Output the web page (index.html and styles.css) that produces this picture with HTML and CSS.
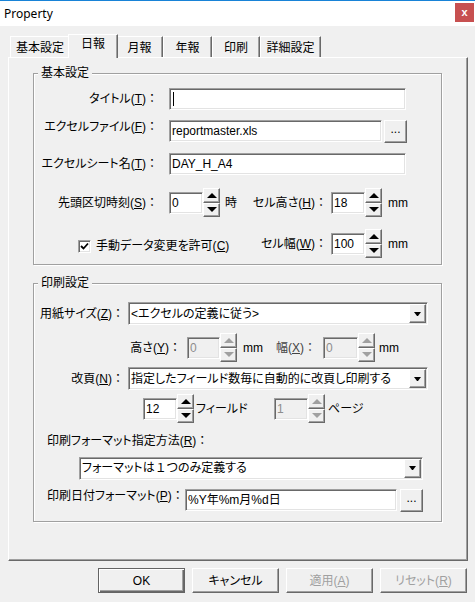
FILE: index.html
```html
<!DOCTYPE html>
<html>
<head>
<meta charset="utf-8">
<title>Property</title>
<link rel="stylesheet" href="styles.css">
</head>
<body>
<div class="window">
  <div class="titlebar">
    <span class="title">Property</span>
    <span class="close">x</span>
  </div>

  <div class="tabs">
    <div class="tab t1">基本設定</div>
    <div class="tab t2 on">日報</div>
    <div class="tab t3">月報</div>
    <div class="tab t4">年報</div>
    <div class="tab t5">印刷</div>
    <div class="tab t6">詳細設定</div>
  </div>

  <div class="panel">
    <fieldset class="group">
      <legend>基本設定</legend>

      <div class="row r-title">
        <span class="lbl lbl-a">タイトル(<u>T</u>)<span class="colon">：</span></span>
        <div class="edit w237"><span class="caret"></span></div>
      </div>

      <div class="row r-file">
        <span class="lbl lbl-a">エクセルファイル(<u>F</u>)<span class="colon">：</span></span>
        <div class="edit w213">reportmaster.xls</div>
        <div class="browse">...</div>
      </div>

      <div class="row r-sheet">
        <span class="lbl lbl-a">エクセルシート名(<u>T</u>)<span class="colon">：</span></span>
        <div class="edit w237">DAY_H_A4</div>
      </div>

      <div class="row r-time">
        <span class="lbl lbl-a">先頭区切時刻(<u>S</u>)<span class="colon">：</span></span>
        <div class="edit w34">0</div>
        <div class="spin"><div class="sb"><i class="up"></i></div><div class="sb"><i class="dn"></i></div></div>
        <span class="unit-ji">時</span>
        <span class="lbl lbl-b">セル高さ(<u>H</u>)<span class="colon">：</span></span>
        <div class="edit w34">18</div>
        <div class="spin"><div class="sb"><i class="up"></i></div><div class="sb"><i class="dn"></i></div></div>
        <span class="mm">mm</span>
      </div>

      <div class="row r-width">
        <div class="chk-area">
          <span class="check"><svg width="9" height="9" viewBox="0 0 9 9"><path d="M1 4 L3.5 6.5 L8 1.5" stroke="#000" stroke-width="1.8" fill="none"/></svg></span>
          <span>手動データ変更を許可(<u>C</u>)</span>
        </div>
        <span class="lbl lbl-b">セル幅(<u>W</u>)<span class="colon">：</span></span>
        <div class="edit w34">100</div>
        <div class="spin"><div class="sb"><i class="up"></i></div><div class="sb"><i class="dn"></i></div></div>
        <span class="mm">mm</span>
      </div>
    </fieldset>

    <fieldset class="group g2">
      <legend>印刷設定</legend>

      <div class="row r-paper">
        <span class="lbl lbl-b">用紙サイズ(<u>Z</u>)<span class="colon">：</span></span>
        <div class="combo w300"><span class="val">&lt;エクセルの定義に従う&gt;</span><span class="drop"><i class="dt"></i></span></div>
      </div>

      <div class="row r-size">
        <span class="lbl lbl-d">高さ(<u>Y</u>)<span class="colon">：</span></span>
        <div class="edit w33 dis">0</div>
        <div class="spin dis"><div class="sb"><i class="up"></i></div><div class="sb"><i class="dn"></i></div></div>
        <span class="mm mm-w">mm</span>
        <span class="lbl lbl-e">幅(<u>X</u>)<span class="colon">：</span></span>
        <div class="edit w35 dis">0</div>
        <div class="spin dis"><div class="sb"><i class="up"></i></div><div class="sb"><i class="dn"></i></div></div>
        <span class="mm mm-2">mm</span>
      </div>

      <div class="row r-break">
        <span class="lbl lbl-b">改頁(<u>N</u>)<span class="colon">：</span></span>
        <div class="combo w300"><span class="val">指定したフィールド数毎に自動的に改頁し印刷する</span><span class="drop"><i class="dt"></i></span></div>
      </div>

      <div class="row r-count">
        <div class="edit w34">12</div>
        <div class="spin"><div class="sb"><i class="up"></i></div><div class="sb"><i class="dn"></i></div></div>
        <span class="unit-field">フィールド</span>
        <div class="edit w34 dis">1</div>
        <div class="spin dis"><div class="sb"><i class="up"></i></div><div class="sb"><i class="dn"></i></div></div>
        <span class="unit-page">ページ</span>
      </div>

      <div class="row r-fmt-lbl">
        <span>印刷フォーマット指定方法(<u>R</u>)<span class="colon">：</span></span>
      </div>

      <div class="row r-fmt">
        <div class="combo w344"><span class="val">フォーマットは<span class="full">１</span>つのみ定義する</span><span class="drop"><i class="dt"></i></span></div>
      </div>

      <div class="row r-date">
        <span class="lbl-date">印刷日付フォーマット(<u>P</u>)<span class="colon">：</span></span>
        <div class="edit w212">%Y年%m月%d日</div>
        <div class="browse b-date">...</div>
      </div>
    </fieldset>
  </div>

  <div class="footer">
    <div class="btn def">OK</div>
    <div class="btn">キャンセル</div>
    <div class="btn dis">適用(<u>A</u>)</div>
    <div class="btn dis">リセット(<u>R</u>)</div>
  </div>
</div>
</body>
</html>
```

FILE: styles.css
```css
body{
margin:0;
background:#f0f0f0;
font-family:"Liberation Sans","Noto Sans CJK JP",sans-serif;
font-size:12px;
line-height:14px;
color:#000;
font-feature-settings:"palt";
}
u{text-decoration:underline;}
.colon,.full{font-feature-settings:normal;}

.window{width:475px;height:602px;}

/* title bar */
.titlebar{
height:26px;
box-sizing:border-box;
border-top:1px solid #1883d7;
background:#fff;
display:flex;
justify-content:space-between;
padding:0 1px 0 4px;
}
.title{font-family:"Noto Sans",sans-serif;font-size:12px;line-height:25px;}
.close{
width:19px;height:19px;margin-top:2px;
background:#c75050;color:#fff;
font:bold 11px/18px "Liberation Sans",sans-serif;
text-align:center;
}

/* tabs */
.tabs{display:flex;padding-left:10px;margin-top:10px;height:21px;}
.tab{
box-sizing:border-box;
height:21px;
border-top:1px solid #fff;
border-left:1px solid #fff;
border-right:1px solid #696969;
box-shadow:inset -1px 0 #a0a0a0;
text-align:center;
padding-top:4px;
white-space:nowrap;
}
.tab.on{
position:relative;z-index:1;
margin:-2px -2px 0;
height:24px;
background:#f0f0f0;
padding-top:2px;
}
.t1{width:60px;}
.t2{width:50px;}
.t3{width:47px;}
.t4{width:49px;}
.t5{width:48px;}
.t6{width:61px;}

/* panel */
.panel{
box-sizing:border-box;
width:460px;height:504px;
margin-left:8px;
border-top:1px solid #fff;
border-left:1px solid #fff;
border-right:1px solid #696969;
border-bottom:1px solid #696969;
box-shadow:inset -1px -1px #a0a0a0;
padding:8px 0 0 24px;
}
.group{
margin:0;padding:0 0 6px 0;
min-width:0;
width:409px;
box-sizing:border-box;
border:1px solid #a0a0a0;
box-shadow:inset 1px 1px #fff,1px 1px #fff;
}
.group legend{
padding:0 3px;
margin-left:4px;
line-height:14px;
background:#f0f0f0;
}
.g2{margin-top:11px;padding-bottom:9px;}

.row{display:flex;align-items:center;}
.r-title{margin-top:8px;height:22px;}
.r-file{margin-top:10px;height:23px;align-items:flex-start;}
.r-sheet{margin-top:10px;height:22px;}
.r-time{margin-top:13px;height:29px;}
.r-width{margin-top:12px;height:29px;}

.r-paper{margin-top:12px;height:23px;}
.r-size{margin-top:8px;height:29px;}
.r-break{margin-top:5px;height:23px;}
.r-count{margin-top:4px;height:29px;padding-left:109px;}
.r-fmt-lbl{margin-top:11px;height:14px;padding-left:13px;}
.r-fmt{margin-top:9px;height:22px;padding-left:45px;}
.r-date{margin-top:10px;height:23px;padding-left:13px;align-items:flex-start;}

.lbl{flex:none;text-align:right;white-space:nowrap;}
.lbl-a{width:124px;margin-right:11px;}
.lbl-b{width:90px;margin-right:4px;}
.lbl-d{width:147px;margin-right:6px;}
.lbl-e{width:49px;margin-right:7px;color:#444;}
.lbl-date{width:138px;flex:none;white-space:nowrap;}

/* sunken edit box */
.edit{
flex:none;
box-sizing:border-box;
height:22px;
display:flex;align-items:center;
background:#fff;
border:1px solid;
border-color:#a0a0a0 #fff #fff #a0a0a0;
box-shadow:inset 1px 1px #696969,inset -1px -1px #e3e3e3;
padding:0 2px;
white-space:nowrap;
overflow:hidden;
}
.edit.dis{background:#f0f0f0;color:#8d8d8d;}
.caret{width:1px;height:14px;background:#000;margin-left:1px;}
.w237{width:237px;}
.w213{width:213px;}
.w212{width:212px;}
.w35{width:35px;}
.w34{width:34px;}
.w33{width:33px;}

/* raised buttons */
.browse,.sb,.drop,.btn{
box-sizing:border-box;
background:#f0f0f0;
border:1px solid;
border-color:#fff #696969 #696969 #fff;
box-shadow:inset -1px -1px #a0a0a0;
}
.browse{
flex:none;
width:23px;height:23px;
margin-left:2px;
text-align:center;
line-height:17px;
}
.b-date{margin-left:3px;}

.spin{flex:none;width:17px;height:29px;display:flex;flex-direction:column;}
.sb{flex:1;display:flex;align-items:center;justify-content:center;}
.sb i{display:block;width:0;height:0;border-left:5px solid transparent;border-right:5px solid transparent;}
.sb .up{border-bottom:5px solid #000;}
.sb .dn{border-top:5px solid #000;}
.spin.dis .up{border-bottom-color:#a0a0a0;}
.spin.dis .dn{border-top-color:#a0a0a0;}

.unit-ji{width:12px;margin-left:5px;flex:none;}
.mm{margin-left:6px;flex:none;}
.mm-w{width:24px;}
.mm-2{margin-left:4px;}
.unit-field{width:78px;margin-left:2px;flex:none;}
.unit-page{margin-left:3px;}

/* combo box */
.combo{
flex:none;
box-sizing:border-box;
height:23px;
display:flex;align-items:center;
background:#fff;
border:1px solid;
border-color:#a0a0a0 #fff #fff #a0a0a0;
box-shadow:inset 1px 1px #696969,inset -1px -1px #e3e3e3;
padding:0 1px 0 2px;
}
.combo .val{flex:1;white-space:nowrap;overflow:hidden;}
.w300{width:300px;}
.w344{width:344px;}
.drop{width:17px;height:19px;display:flex;align-items:center;justify-content:center;flex:none;}
.dt{display:block;width:1px;height:0;border-left:3px solid transparent;border-right:3px solid transparent;border-top:4px solid #000;}

/* checkbox */
.chk-area{
width:203px;
box-sizing:border-box;
padding-left:44px;
margin-top:5px;
display:flex;align-items:center;gap:5px;
white-space:nowrap;
flex:none;
}
.check{
width:13px;height:13px;
box-sizing:border-box;
background:#fff;
border:1px solid;
border-color:#a0a0a0 #fff #fff #a0a0a0;
box-shadow:inset 1px 1px #696969,inset -1px -1px #e3e3e3;
display:flex;align-items:center;justify-content:center;
}

/* dialog buttons */
.footer{display:flex;justify-content:flex-end;gap:7px;padding-right:8px;margin-top:7px;}
.btn{
width:87px;height:25px;
display:flex;align-items:center;justify-content:center;
}
.btn.def{
border:1px solid #646464;
box-shadow:inset 1px 1px #fff,inset -1px -1px #696969,inset -2px -2px #a0a0a0;
}
.btn.dis{color:#a0a0a0;}
```
